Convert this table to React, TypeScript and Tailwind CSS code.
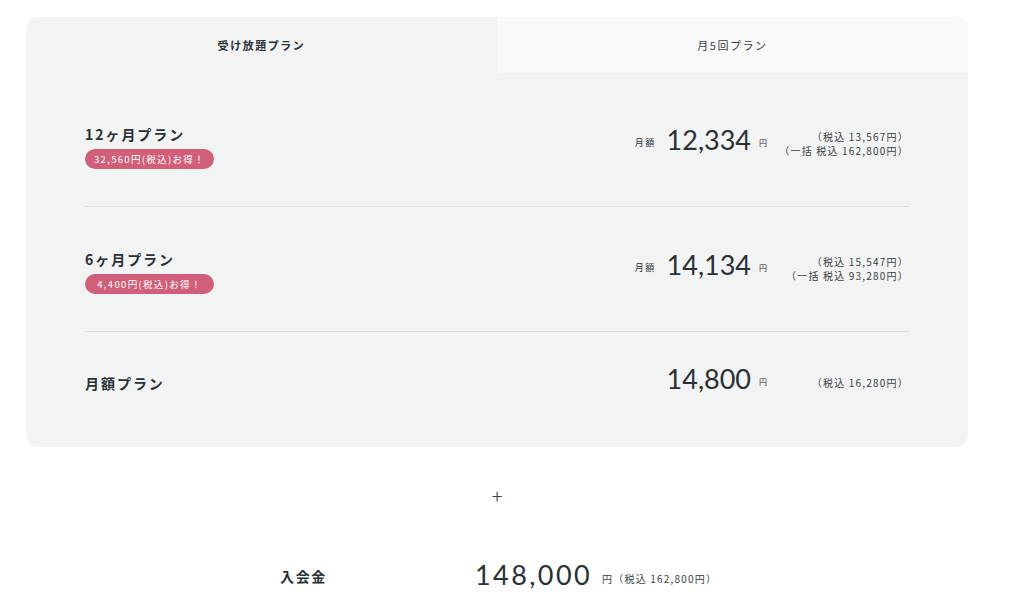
import React from "react";

interface Plan {
    name: string;
    badge?: string;
    monthly: boolean;
    price: string;
    notes: string[];
}

const plans: Plan[] = [
    { name: "12ヶ月プラン", badge: "32,560円(税込)お得！", monthly: true, price: "12,334", notes: ["（税込 13,567円）", "（一括 税込 162,800円）"] },
    { name: "6ヶ月プラン", badge: "4,400円(税込)お得！", monthly: true, price: "14,134", notes: ["（税込 15,547円）", "（一括 税込 93,280円）"] },
    { name: "月額プラン", monthly: false, price: "14,800", notes: ["（税込 16,280円）"] },
];

const jp = "font-['Noto_Sans_CJK_JP',sans-serif]";
const num = "font-['Lato','Noto_Sans_CJK_JP',sans-serif]";

export default function App() {
    return (
        <div className={`w-[1024px] h-[613px] bg-white text-[#2a3136] ${jp} overflow-hidden`}>
            <div className="pt-[17px] pl-[26px]">
                <div className="w-[942px] bg-[#f2f3f3] rounded-[12px] overflow-hidden">
                    {/* tabs */}
                    <div className="flex h-[56px]">
                        <div className="flex-1 flex items-center justify-center text-[11px] font-bold tracking-[0.14em]">
                            受け放題プラン
                        </div>
                        <div className="flex-1 flex items-center justify-center bg-[#f9f9f9] text-[11px] tracking-[0.14em] text-[#3a4044]">
                            月5回プラン
                        </div>
                    </div>

                    <div className="pt-[9px] pb-[13px] px-[59px]">
                        {plans.map((plan, i) => (
                            <div
                                key={plan.name}
                                className={`flex items-center ${i < plans.length - 1 ? "h-[125px] border-b border-[#dcdfde]" : "h-[102px]"}`}
                            >
                                <div className={`flex-1 flex flex-col items-start ${plan.badge ? "mt-[5px]" : ""}`}>
                                    <h3 className="text-[14px] font-bold tracking-[0.14em] leading-[20px]">{plan.name}</h3>
                                    {plan.badge && (
                                        <span className="mt-[5px] w-[129px] h-[20px] flex items-center justify-center rounded-full bg-[#d15f79] text-white text-[9.5px] tracking-[0.14em]">
                                            {plan.badge}
                                        </span>
                                    )}
                                </div>
                                <div className="flex items-center -mt-[9px] mr-[7px]">
                                    {plan.monthly && (
                                        <span className="text-[9px] tracking-[0.15em] mr-[11px] mt-[6px]">月額</span>
                                    )}
                                    <span className={`${num} text-[27px] leading-none`}>{plan.price}</span>
                                    <span className="text-[8px] ml-[8px] mt-[6px]">円</span>
                                </div>
                                <div className="w-[135px] flex flex-col items-end text-[10px] leading-[14px] tracking-[0.12em] text-[#3a4044]">
                                    {plan.notes.map((n) => (
                                        <span key={n}>{n}</span>
                                    ))}
                                </div>
                            </div>
                        ))}
                    </div>
                </div>

                {/* plus */}
                <div className="w-[942px] flex justify-center mt-[39px] text-[20px] font-light leading-none text-[#3a4044]">
                    +
                </div>
            </div>

            {/* admission fee */}
            <div className="flex items-center mt-[55px] pl-[280px]">
                <span className="w-[195px] text-[14px] font-bold tracking-[0.12em] mt-[4px]">入会金</span>
                <span className={`${num} text-[27px] leading-none tracking-[0.09em]`}>148,000</span>
                <span className="ml-[10px] mt-[8px] text-[10px] tracking-[0.12em] text-[#3a4044]">円（税込 162,800円）</span>
            </div>
        </div>
    );
}
